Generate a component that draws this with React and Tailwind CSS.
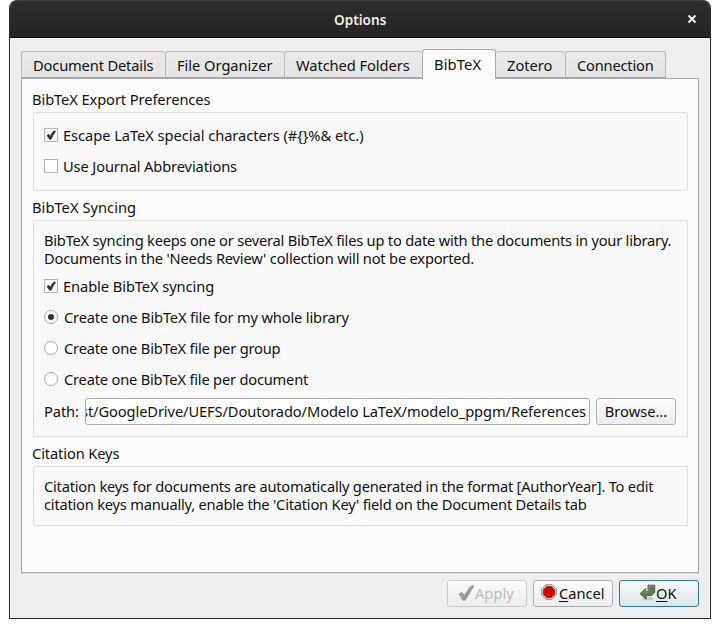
import React from "react";

function Tab({ children, className }) {
  return (
    <div className={`h-[27px] shrink-0 rounded-t-[3px] border border-[#b9b9b9] border-b-[#a5a5a5] bg-linear-to-b from-[#eaeaea] to-[#e5e5e5] pl-[11px] pt-[4px] ${className}`}>
      {children}
    </div>
  );
}

function GroupBox({ title, titleClass, className, children }) {
  return (
    <section>
      <h2 className={`h-[29px] pl-[10px] pt-[7px] ${titleClass}`}>{title}</h2>
      <div className={`ml-[11px] w-[655px] rounded-[2px] border border-[#dedede] bg-[#f9f9f9] pl-[10px] ${className}`}>
        {children}
      </div>
    </section>
  );
}

function Check({ checked, label, className }) {
  return (
    <label className="flex h-[31px] items-center">
      <span className="mr-[5px] h-[14px] w-[14px] border border-[#b4b4b4] bg-white">
        {checked && (
          <svg viewBox="0 0 12 12" className="block h-3 w-3">
            <path d="M2 6.4 3.9 5.4 5.2 7.5 Q6.8 3.8 9.2 1.8 L10.6 2.6 Q7.9 5.5 6.1 10.2 L4.6 10.2 Z" fill="#2c2c2c" stroke="#2c2c2c" strokeWidth=".7" />
          </svg>
        )}
      </span>
      <span className={className}>{label}</span>
    </label>
  );
}

function Radio({ checked, label, className }) {
  return (
    <label className="flex h-[31px] items-center">
      <span className="mr-[6px] flex h-[14px] w-[14px] items-center justify-center rounded-full border border-[#a9a9a9] bg-white">
        {checked && <span className="h-[6px] w-[6px] rounded-full bg-[#303030]" />}
      </span>
      <span className={className}>{label}</span>
    </label>
  );
}

function Button({ className, children }) {
  return (
    <button className={`flex h-[27px] shrink-0 items-center rounded-[3px] border bg-linear-to-b pb-[2px] ${className}`}>
      {children}
    </button>
  );
}

export default function App() {
  return (
    <div className="h-[628px] w-[720px] overflow-hidden bg-white pl-[9px] font-['Noto_Sans',sans-serif] text-[14.67px] leading-[18px] whitespace-nowrap text-[#111]">
      <div className="h-[619px] w-[702px] overflow-hidden rounded-t-[8px] border border-t-0 border-[#2b2b2b] bg-[#eeeeee]">
        <header className="flex h-[38px] items-center border-t border-b border-t-[#414141] border-b-[#0c0c0c] bg-linear-to-b from-[#2e2e2e] to-[#242424] pl-[324px] text-[13.6px] font-semibold text-[#eeeeec]">
          <h1 className="w-[353px] pt-px">Options</h1>
          <svg viewBox="0 0 10 10" className="h-[10px] w-[10px]">
            <path d="M1.5 1.5 8.5 8.5M8.5 1.5 1.5 8.5" stroke="#eeeeec" strokeWidth="2" />
          </svg>
        </header>

        <nav className="ml-[11px] flex h-[40px] items-end">
          <Tab className="w-[144px] border-r-0 tracking-[-0.15px]">Document Details</Tab>
          <Tab className="w-[119px] border-r-0 tracking-[-0.03px]">File Organizer</Tab>
          <Tab className="w-[138px] border-r-0 tracking-[-0.07px]">Watched Folders</Tab>
          <div className="z-10 -mb-px h-[30px] w-[74px] shrink-0 rounded-t-[3px] border border-b-0 border-[#a9a9a9] bg-[#fcfcfc] pl-[11px] pt-[5px] tracking-[0.15px]">BibTeX</div>
          <Tab className="w-[69px] border-l-0 border-r-0">Zotero</Tab>
          <Tab className="w-[101px] tracking-[-0.2px]">Connection</Tab>
        </nav>

        <main className="ml-[11px] h-[495px] w-[678px] border border-[#a9a9a9] bg-[#fcfcfc] pt-[4px] shadow-[0_1px_0_#dcdcdc]">
          <GroupBox title="BibTeX Export Preferences" titleClass="tracking-[-0.09px]" className="h-[79px] pt-[6px]">
            <Check checked label="Escape LaTeX special characters (#{}%& etc.)" className="tracking-[-0.045px]" />
            <Check label="Use Journal Abbreviations" className="tracking-[-0.13px]" />
          </GroupBox>

          <GroupBox title="BibTeX Syncing" titleClass="tracking-[0.04px]" className="h-[217px] pt-[10px]">
            <p className="mb-[3px]">
              <span className="tracking-[-0.22px]">BibTeX syncing keeps one or several BibTeX files up to date with the documents in your library.</span>
              <br />
              <span className="tracking-[-0.2px]">Documents in the 'Needs Review' collection will not be exported.</span>
            </p>
            <Check checked label="Enable BibTeX syncing" className="tracking-[-0.08px]" />
            <Radio checked label="Create one BibTeX file for my whole library" className="tracking-[-0.165px]" />
            <Radio label="Create one BibTeX file per group" className="tracking-[-0.19px]" />
            <Radio label="Create one BibTeX file per document" className="tracking-[-0.2px]" />
            <div className="mt-[4px] flex items-center">
              <span className="w-[41px] pb-[2px] tracking-[-0.1px]">Path:</span>
              <div className="flex h-[27px] w-[505px] items-center justify-end overflow-hidden rounded-[3px] border border-[#a9a9a9] bg-white pb-[2px] pr-[3px]">
                <span className="tracking-[-0.1px]">st/GoogleDrive/UEFS/Doutorado/Modelo LaTeX/modelo_ppgm/References</span>
              </div>
              <Button className="ml-[6px] w-[80px] justify-center border-[#afafaf] from-[#fdfdfd] to-[#ececec]">Browse...</Button>
            </div>
          </GroupBox>

          <GroupBox title="Citation Keys" titleClass="tracking-[-0.12px]" className="h-[60px] pt-[10px]">
            <p>
              <span className="tracking-[-0.22px]">Citation keys for documents are automatically generated in the format [AuthorYear]. To edit</span>
              <br />
              <span className="tracking-[-0.215px]">citation keys manually, enable the 'Citation Key' field on the Document Details tab</span>
            </p>
          </GroupBox>
        </main>

        <footer className="ml-[437px] mt-[7px] flex gap-[6px]">
          <Button className="w-[80px] border-[#cacaca] from-[#fafafa] to-[#ededed] pl-[10px] text-[#bdbdbd]">
            <svg viewBox="0 0 17 18" className="h-[18px] w-[17px]">
              <path d="M1 10 4 8.3 6.3 11.3 12.3 2.5 Q14 1.4 16 1.8 L7.2 16.3 4.8 16.3 Z" fill="#9c9c9c" stroke="#8c8c8c" strokeWidth=".6" />
            </svg>
            <span>Apply</span>
          </Button>
          <Button className="w-[80px] border-[#afafaf] from-[#fdfdfd] to-[#ececec] pl-[7px]">
            <svg viewBox="0 0 16 16" className="mr-[2px] -mt-px h-4 w-4">
              <path d="M5 .8h6L15.2 5v6L11 15.2H5L.8 11V5Z" fill="#e5e5e1" stroke="#7c7c78" />
              <path d="M5.7 2.5h4.6l3.2 3.2v4.6l-3.2 3.2H5.7l-3.2-3.2V5.7Z" fill="#d40000" stroke="#a40000" strokeWidth=".7" />
            </svg>
            <span><span className="underline decoration-1 underline-offset-[2px]">C</span>ancel</span>
          </Button>
          <Button className="w-[80px] border-[#2e78a0] from-[#fbfcfc] to-[#dbe5ea] pl-[19px]">
            <svg viewBox="0 0 17 17" className="h-[17px] w-[17px]">
              <ellipse cx="9" cy="14.5" rx="6" ry="1.7" fill="#929a9e" opacity=".4" />
              <path d="M9 1.2H15.7V8.2L12.5 11.5H7.2V15.2L1 9.7 6.6 4.6V7.5H9Z" fill="#687957" stroke="#3f4b35" strokeWidth=".8" />
              <path d="M9.8 2.1H14.9M9.8 2.1V6.2L8.8 8.2H6V6.4L2.4 9.6" fill="none" stroke="#98a388" strokeWidth=".6" />
            </svg>
            <span><span className="underline decoration-1 underline-offset-[2px]">O</span>K</span>
          </Button>
        </footer>
      </div>
    </div>
  );
}
